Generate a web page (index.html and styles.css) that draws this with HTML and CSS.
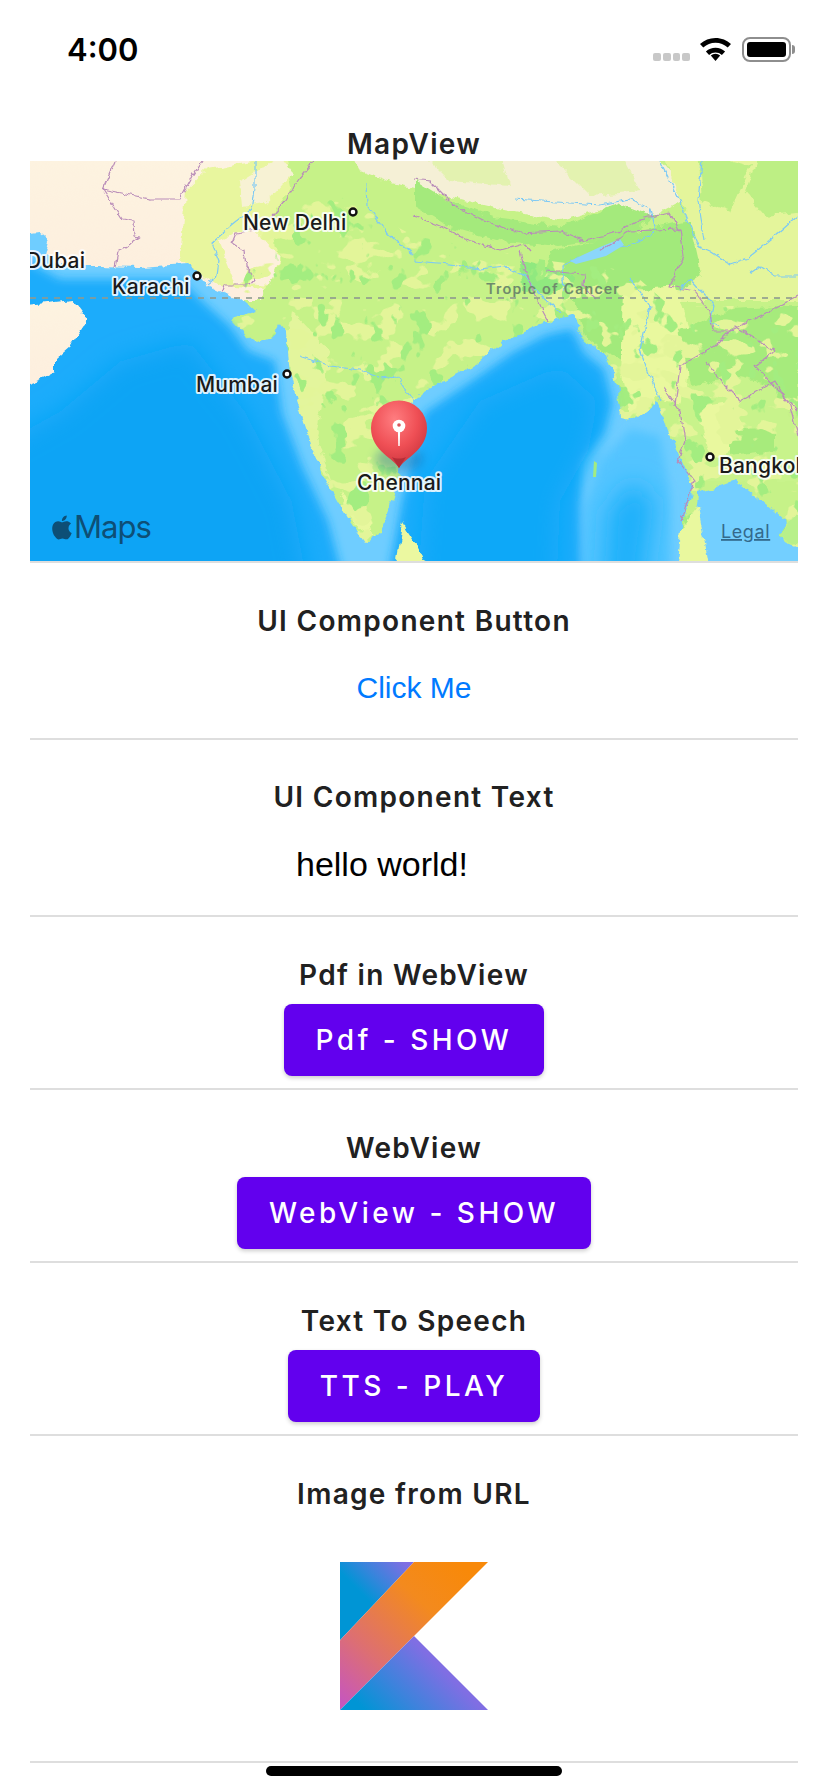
FILE: index.html
```html
<!DOCTYPE html>
<html lang="en">
<head>
<meta charset="utf-8">
<title>Compose UI</title>
<link rel="stylesheet" href="styles.css">
</head>
<body>
<div class="app">
  <header class="status">
    <span class="clock">4:00</span>
    <div class="status-icons">
      <div class="signal"><i></i><i></i><i></i><i></i></div>
      <svg class="wifi" viewBox="0 0 31 23"><path d="M15.5 23 10.8 17.6a7.2 7.2 0 0 1 9.4 0zM15.5 9.8c3.7 0 7 1.4 9.6 3.7l-3.2 3.4a9.8 9.8 0 0 0-12.8 0l-3.2-3.4a14.4 14.4 0 0 1 9.6-3.7zM15.500 0c6 0 11.400 2.300 15.500 6.100l-3.300 3.500A18.800 18.800 0 0 0 15.500 4.800 18.800 18.800 0 0 0 3.300 9.600L0 6.100A22.700 22.700 0 0 1 15.500 0z" fill="#000"/></svg>
      <div class="battery"><div class="battery-fill"></div></div>
    </div>
  </header>
  <main class="content">
    <h2 class="title map-title">MapView</h2>
    <svg class="map" viewBox="0 0 768 400" xmlns="http://www.w3.org/2000/svg">
      <defs>
        <filter id="rough" x="-5%" y="-5%" width="110%" height="110%" color-interpolation-filters="sRGB">
          <feTurbulence type="fractalNoise" baseFrequency="0.09" numOctaves="3" seed="4"/>
          <feDisplacementMap in="SourceGraphic" scale="9" xChannelSelector="R" yChannelSelector="G"/>
        </filter>
        <filter id="wiggle" x="-5%" y="-5%" width="110%" height="110%" color-interpolation-filters="sRGB">
          <feTurbulence type="fractalNoise" baseFrequency="0.14" numOctaves="2" seed="8"/>
          <feDisplacementMap in="SourceGraphic" scale="6" xChannelSelector="R" yChannelSelector="G"/>
        </filter>
        <filter id="blur12" x="-30%" y="-30%" width="160%" height="160%"><feGaussianBlur stdDeviation="12"/></filter>
        <filter id="blur5" x="-30%" y="-30%" width="160%" height="160%"><feGaussianBlur stdDeviation="5"/></filter>
        <filter id="mottleY" x="0" y="0" width="100%" height="100%" color-interpolation-filters="sRGB">
          <feTurbulence type="fractalNoise" baseFrequency="0.035 0.05" numOctaves="3" seed="11"/>
          <feColorMatrix values="0 0 0 0 .89 0 0 0 0 .96 0 0 0 0 .6 1 0 0 0 0"/>
          <feComponentTransfer><feFuncA type="linear" slope="24" intercept="-13.5"/></feComponentTransfer>
        </filter>
        <filter id="mottleG" x="0" y="0" width="100%" height="100%" color-interpolation-filters="sRGB">
          <feTurbulence type="fractalNoise" baseFrequency="0.05 0.04" numOctaves="3" seed="29"/>
          <feColorMatrix values="0 0 0 0 .64 0 0 0 0 .93 0 0 0 0 .5 1 0 0 0 0"/>
          <feComponentTransfer><feFuncA type="linear" slope="24" intercept="-15"/></feComponentTransfer>
        </filter>
        <clipPath id="greenland"><path d="M238 60 300 30 384 75 520 100 600 110 640 145 768 145V400H230L205 140z"/></clipPath>
        <radialGradient id="pinBody" cx="42%" cy="28%" r="75%">
          <stop offset="0" stop-color="#ff7d80"/><stop offset=".55" stop-color="#ef4f55"/><stop offset="1" stop-color="#c9333c"/>
        </radialGradient>
        <linearGradient id="peach" x1="0" y1="0" x2="0" y2="1">
          <stop offset="0" stop-color="#fdf3e0"/><stop offset="1" stop-color="#fdeede"/>
        </linearGradient>
      </defs>

      <rect width="768" height="400" fill="#c6f288"/>

      <g filter="url(#rough)">
        <path d="M-10-10H250L228 30 215 60 238 100 232 140H-10z" fill="url(#peach)"/>
        <path d="M155 30 178 8 222 0 235 -10 255 -10 262 25 240 62 250 100 236 128 190 125 150 100z" fill="#e8f69e"/>
        <path d="M188 80 222 66 250 95 240 125 205 122z" fill="#fdf0dc"/>
        <path d="M210 20 250 -5 262 12 235 42 212 45z" fill="#f7f2d4"/>
        <path d="M320-10H620L660 35 610 62 570 48 530 60 470 48 415 34 362 22 330 10z" fill="#f5f0d6"/>
        <path d="M390-10 470-10 480 25 420 20zM520-5 590-8 610 30 560 35z" fill="#e3f2b0"/>
        <path d="M630-10H775V140H640L660 95 655 50z" fill="#e4f59b"/>
        <path d="M668-10 720 5 700 50 672 40zM730-10H775V50L735 55 715 30z" fill="#bdef84"/>
        <path d="M384 18 420 40 470 58 530 66 590 42 625 55 600 75 530 85 470 80 420 66 384 45z" fill="#a4ea7c"/>
        <path d="M520 90 600 72 660 60 672 115 650 130 610 145 605 205 575 192 555 175 545 140 510 115z" fill="#a2ea7b"/>
        <path d="M490 100 545 115 535 135 492 128z" fill="#90e97f"/>
        <path d="M595 130 645 125 660 170 655 245 625 238 600 255 592 215z" fill="#e9f89e"/>
        <path d="M650 170 700 148 768 145 768 240 720 240 690 220 660 225z" fill="#a6eb7c"/>
        <path d="M650 230 700 215 745 225 768 270 768 320 710 320 670 320 645 280z" fill="#c8f38b"/>
        <path d="M668 245 700 240 720 280 680 300z" fill="#e9f89e"/>
        <path d="M700 270 745 265 745 290 700 295z" fill="#a7eb7c"/>
        <path d="M262 150 300 190 286 270 300 320 278 290 250 220z" fill="#e3f59c"/>
        <path d="M310 330 340 360 345 376 325 365z" fill="#e9f89e"/>
      </g>

      <g clip-path="url(#greenland)">
        <rect width="768" height="400" filter="url(#mottleY)"/>
        <rect width="768" height="400" filter="url(#mottleG)"/>
      </g>

      <g filter="url(#rough)">
        <path fill="#6fcdff" d="M-20 76 8 72 18 80 14 96 40 106 67 106 110 107 157 104 170 112 178 125 192 132 210 137 225 150 200 157 212 170 227 182 243 176 250 162 256 170 258 190 260 216 270 249 282 285 292 312 317 356 335 382 350 372 362 340 368 320 372 280 384 236 420 216 447 202 471 182 504 166 531 156 544 152 554 179 574 192 587 222 591 256 604 259 627 242 644 282 664 326 651 366 648 420H-20z"/>
        <path fill="#73cfff" d="M680 420 664 372 668 332 704 319 744 349 758 362 748 376 768 385 790 420z"/>
      </g>
      <g filter="url(#blur5)">
        <path fill="#1eacfb" d="M-60 70 30 118 150 118 172 140 200 165 218 190 245 200 252 252 272 305 298 360 325 460H-60z"/>
        <path fill="#1eacfb" d="M350 460 372 340 394 252 442 220 482 192 516 174 542 168 554 192 574 208 582 242 574 272 552 300 550 345 552 460z"/>
        <path fill="#53c4ff" d="M600 268 630 275 640 330 642 460H552L555 345 572 300z"/>
      </g>
      <g filter="url(#blur12)">
        <path fill="#07a4f5" d="M-60 300 30 250 90 200 160 180 215 250 262 340 285 460H-60z"/>
        <path fill="#0ca8f8" d="M385 460 395 320 450 240 530 205 568 240 558 290 530 340 525 460z"/>
        <path fill="#1fb0fa" d="M572 460 578 350 602 320 624 340 616 400 614 460z"/>
      </g>

      <g filter="url(#rough)">
        <path fill="url(#peach)" d="M-20 146 43 139 58 159 40 186 25 199 25 211 10 219-20 230z"/>
        <path fill="#ebf8a0" d="M365 410 373 362 384 379 400 410z"/>
        <path fill="#b8f08a" d="M748 376 768 352 780 352 780 385z"/>
        <path fill="#e9f89e" d="M650 372 668 345 680 410 646 410z"/>
      </g>
      <path fill="#a2eb82" d="M563 316l1-16 3 2-1 14z"/>

      <g fill="none" stroke="#7cc9f5" stroke-width="1.200" stroke-linejoin="round" filter="url(#wiggle)">
        <path d="M225 0V28L222 48 200 66 182 82 189 100 187 115 177 123"/>
        <path d="M337 22 338 45 355 70 384 95"/>
        <path d="M270 195 300 205 330 209 350 217 367 215 384 240"/>
        <path d="M384 100 420 103 450 108 475 105 495 115 505 128 520 142 530 152"/>
        <path d="M484 38 540 42 570 44 600 38 620 48 625 70"/>
        <path d="M534 130 532 105 560 92 600 84 625 72"/>
        <path d="M630 0 650 40 668 85 680 90 700 103 718 97 745 75 768 55"/>
        <path d="M672 0 668 40 675 80"/>
        <path d="M720 112 730 105 745 115 768 115"/>
        <path d="M650 130 660 118 684 145 680 160 690 165"/>
        <path d="M600 118 620 145 610 190 630 240"/>
      </g>
      <path fill="#8bd6fb" d="M540 100l30-14 20-8 4 6-18 11-30 8z"/>

      <g fill="none" stroke="#b98cb9" stroke-width="1.200" stroke-linejoin="round" filter="url(#wiggle)">
        <path d="M73 28 85 0M73 28 120 38 150 38 162 16 172 0M73 28 92 58 103 60 104 75 110 76 96 86 88 90 85 106"/>
        <path d="M284 0 270 17 255 40 240 58 232 68 206 72 202 82 214 90 216 105 225 118 220 124 195 124 192 132"/>
        <path d="M384 18 400 20 425 45 455 60 490 72 530 70 555 80 590 70 610 58 640 52 650 70"/>
        <path d="M384 55 410 65 435 78 470 90 494 83 500 90"/>
        <path d="M490 90 495 110 510 145 518 160"/>
        <path d="M515 110 554 113 553 125 566 138"/>
        <path d="M570 90 600 70 650 68 654 95 640 125 664 130 680 150 683 170 700 170 730 155 768 135"/>
        <path d="M645 245 650 205 685 185 705 165 745 190 725 205 768 250"/>
        <path d="M675 200 695 225 710 240 745 220 760 245 768 275"/>
        <path d="M634 226 650 250 655 280 648 300 664 320 654 350 650 360"/>
      </g>

      <line class="tropic" x1="0" y1="137" x2="768" y2="137"/>

      <text class="tropic-label" x="456" y="133">Tropic of Cancer</text>

      <circle class="city" cx="323" cy="51" r="3.500"/>
      <circle class="city" cx="167" cy="115" r="3.500"/>
      <circle class="city" cx="257" cy="213" r="3.500"/>
      <circle class="city" cx="680" cy="296" r="3.500"/>

      <text class="city-label" x="213" y="69">New Delhi</text>
      <text class="city-label" x="-4" y="107">Dubai</text>
      <text class="city-label" x="82" y="133">Karachi</text>
      <text class="city-label" x="166" y="231">Mumbai</text>
      <text class="city-label" x="689" y="312">Bangkok</text>

      <ellipse cx="369" cy="298" rx="24" ry="13" fill="#0b5d9a" opacity=".35" filter="url(#blur5)"/>
      <path fill="url(#pinBody)" d="M369 307C365 298 341 290 341 267A28 27.500 0 0 1 397 267C397 290 373 298 369 307z"/>
      <path fill="#b52e38" d="M369 307 362 296C366 298 372 298 376 296z"/>
      <path fill="#fff" d="M367.800 267H370.200L369.700 285H368.300z"/>
      <circle cx="369" cy="265" r="6.300" fill="#fff"/>
      <circle cx="369" cy="264" r="1.800" fill="#d9545b"/>
      <text class="city-label" x="327" y="329">Chennai</text>

      <path class="apple" transform="translate(17.600 352) scale(1.200)" d="M18.710 19.500c-.83 1.240-1.710 2.450-3.050 2.470-1.340.03-1.770-.79-3.290-.79-1.530 0-2 .77-3.270.82-1.310.05-2.300-1.320-3.140-2.530C4.250 17 2.940 12.450 4.700 9.390c.87-1.520 2.430-2.480 4.120-2.510 1.280-.02 2.500.87 3.290.87.78 0 2.260-1.070 3.810-.91.65.03 2.470.26 3.640 1.980-.09.06-2.170 1.280-2.150 3.810.03 3.020 2.650 4.030 2.680 4.040-.03.07-.42 1.440-1.380 2.830M13 3.500c.73-.83 1.940-1.460 2.940-1.500.13 1.170-.34 2.350-1.040 3.190-.69.85-1.830 1.510-2.950 1.420-.15-1.150.41-2.350 1.050-3.110z"/>
      <text class="maps-word" x="44" y="377">Maps</text>
      <text class="legal" x="691" y="377">Legal</text>
    </svg>

    <section class="row row-button">
      <h2 class="title">UI Component Button</h2>
      <a class="link">Click Me</a>
    </section>
    <section class="row row-text">
      <h2 class="title">UI Component Text</h2>
      <p class="hello">hello world!</p>
    </section>
    <section class="row row-action">
      <h2 class="title">Pdf in WebView</h2>
      <button class="btn">Pdf - SHOW</button>
    </section>
    <section class="row row-action">
      <h2 class="title">WebView</h2>
      <button class="btn">WebView - SHOW</button>
    </section>
    <section class="row row-action">
      <h2 class="title">Text To Speech</h2>
      <button class="btn">TTS - PLAY</button>
    </section>
    <section class="row row-image">
      <h2 class="title">Image from URL</h2>
      <svg class="kotlin" viewBox="0 0 60 60" xmlns="http://www.w3.org/2000/svg">
        <defs>
          <linearGradient id="kBand" gradientUnits="userSpaceOnUse" x1="50" y1="2" x2="0" y2="56">
            <stop offset="0" stop-color="#f88909"/><stop offset=".3" stop-color="#f38a1e"/><stop offset=".7" stop-color="#dd6f72"/><stop offset="1" stop-color="#c757bc"/>
          </linearGradient>
          <linearGradient id="kTop" gradientUnits="userSpaceOnUse" x1="9" y1="13" x2="24" y2="-2">
            <stop offset="0" stop-color="#0095d5"/><stop offset=".45" stop-color="#3c83dc"/><stop offset="1" stop-color="#806ee3"/>
          </linearGradient>
          <linearGradient id="kBottom" gradientUnits="userSpaceOnUse" x1="14" y1="64" x2="38" y2="40">
            <stop offset="0" stop-color="#0095d5"/><stop offset=".45" stop-color="#3c83dc"/><stop offset="1" stop-color="#806ee3"/>
          </linearGradient>
        </defs>
        <path d="M0 0H30L0 31.700z" fill="url(#kTop)"/>
        <path d="M30 0H60L0 60V31.700z" fill="url(#kBand)"/>
        <path d="M0 60 30 30 60 60z" fill="url(#kBottom)"/>
      </svg>
    </section>
  </main>
  <div class="home-indicator"></div>
</div>
</body>
</html>
```
FILE: styles.css
```css
* { box-sizing: border-box; }

html, body {
  margin: 0;
  padding: 0;
  background: #fff;
}

.app {
  position: relative;
  width: 828px;
  height: 1792px;
  overflow: hidden;
  font-family: Inter, "Liberation Sans", sans-serif;
}

.status {
  height: 88px;
  display: flex;
  justify-content: space-between;
  align-items: flex-start;
  padding: 31px 33px 0 67px;
}

.clock {
  font-size: 31px;
  line-height: 38px;
  font-weight: 600;
  color: #000;
}

.status-icons {
  display: flex;
  align-items: flex-end;
  margin-top: 6px;
  width: 143px;
}

.signal {
  display: flex;
  gap: 2px;
  margin: 0 0 1px 1px;
}

.signal i {
  display: block;
  width: 7.750px;
  height: 8px;
  border-radius: 2px;
  background: #c8c8c8;
}

.wifi {
  width: 31px;
  height: 23px;
  margin-left: 10px;
  margin-bottom: 1px;
}

.battery {
  position: relative;
  width: 49px;
  height: 25px;
  margin-left: 11px;
  padding: 3px;
  border: 2px solid #8e8e8e;
  border-radius: 8px;
}

.battery::after {
  content: "";
  position: absolute;
  right: -6px;
  top: 6px;
  width: 3px;
  height: 9px;
  border-radius: 0 3px 3px 0;
  background: #8e8e8e;
}

.battery-fill {
  height: 100%;
  border-radius: 3px;
  background: #000;
}

.content {
  padding: 0 30px;
  display: flex;
  flex-direction: column;
}

.title {
  margin: 0;
  font-size: 28px;
  line-height: 34px;
  font-weight: 600;
  letter-spacing: 1.300px;
  color: #212121;
  text-align: center;
}

.map-title {
  margin-top: 39px;
}

.map {
  display: block;
  width: 768px;
  height: 400px;
  overflow: hidden;
}

.tropic {
  stroke: #8f9a8f;
  stroke-width: 2;
  stroke-dasharray: 6 6;
  opacity: .8;
}

.tropic-label {
  font-family: Roboto, sans-serif;
  font-size: 15.500px;
  font-weight: 500;
  letter-spacing: 1.200px;
  fill: #6f8a6c;
}

.city {
  fill: #fff;
  stroke: #111;
  stroke-width: 2.400;
}

.city-label {
  font-family: Inter, sans-serif;
  font-size: 21px;
  font-weight: 500;
  letter-spacing: .2px;
  fill: #1a1a1a;
  stroke: #fff;
  stroke-width: 4px;
  stroke-linejoin: round;
  stroke-opacity: .85;
  paint-order: stroke;
}

.apple {
  fill: #0d4f76;
}

.maps-word {
  font-family: Inter, sans-serif;
  font-size: 31px;
  font-weight: 400;
  letter-spacing: -1px;
  fill: #0d4f76;
}

.legal {
  font-family: Inter, sans-serif;
  font-size: 18px;
  letter-spacing: .6px;
  fill: #33698c;
  text-decoration: underline;
}

.row {
  display: flex;
  flex-direction: column;
  align-items: center;
  border-top: 2px solid #dedede;
}

.row-button {
  height: 177px;
  padding-top: 41px;
}

.row-text {
  height: 177px;
  padding-top: 40px;
}

.row-action {
  height: 173px;
  padding-top: 41px;
}

.row-image {
  height: 329px;
  padding-top: 41px;
  border-bottom: 2px solid #dedede;
}

.link {
  margin-top: 32px;
  font-family: "Liberation Sans", sans-serif;
  font-size: 30px;
  line-height: 36px;
  color: #007aff;
}

.hello {
  margin: 30px 0 0;
  width: 236px;
  font-family: "Liberation Sans", sans-serif;
  font-size: 34px;
  line-height: 40px;
  color: #000;
}

.btn {
  margin-top: 12px;
  height: 72px;
  padding: 0 32px;
  border: 0;
  border-radius: 8px;
  background: #6200ee;
  color: #fff;
  font-family: Inter, sans-serif;
  font-size: 28px;
  font-weight: 500;
  letter-spacing: 3.500px;
  box-shadow: 0 2px 4px rgba(0, 0, 0, .2);
}

.kotlin {
  display: block;
  width: 148px;
  height: 148px;
  margin-top: 51px;
}

.home-indicator {
  position: absolute;
  left: 266px;
  top: 1766px;
  width: 296px;
  height: 10px;
  border-radius: 5px;
  background: #000;
}
```
